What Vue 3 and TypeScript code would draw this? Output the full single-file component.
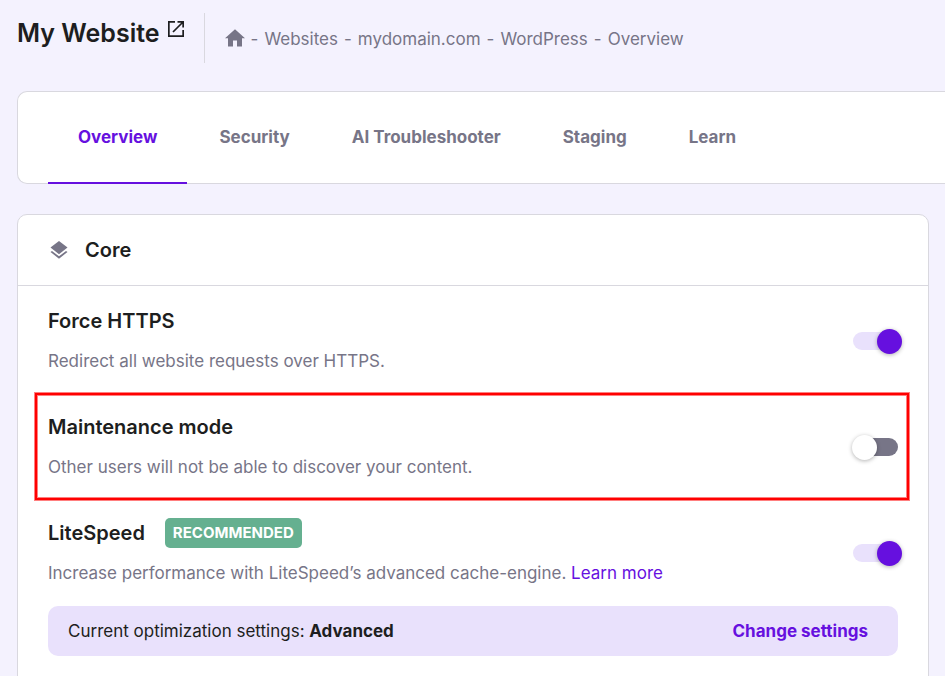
<script setup lang="ts">
import { reactive, ref } from 'vue'

interface Setting {
  id: string
  title: string
  description: string
  enabled: boolean
  highlighted?: boolean
  badge?: string
  link?: string
}

const crumbs: string[] = ['Websites', 'mydomain.com', 'WordPress', 'Overview']
const tabs: string[] = ['Overview', 'Security', 'AI Troubleshooter', 'Staging', 'Learn']
const activeTab = ref<string>('Overview')

const settings = reactive<Setting[]>([
  {
    id: 'force-https',
    title: 'Force HTTPS',
    description: 'Redirect all website requests over HTTPS.',
    enabled: true,
  },
  {
    id: 'maintenance-mode',
    title: 'Maintenance mode',
    description: 'Other users will not be able to discover your content.',
    enabled: false,
    highlighted: true,
  },
  {
    id: 'litespeed',
    title: 'LiteSpeed',
    description: 'Increase performance with LiteSpeed’s advanced cache-engine.',
    enabled: true,
    badge: 'RECOMMENDED',
    link: 'Learn more',
  },
])
</script>

<template>
  <div class="page">
    <header class="header">
      <div class="site">
        <h1 class="site-title">My Website</h1>
        <a href="#" class="site-link" aria-label="Open website">
          <svg viewBox="0 0 18 18" width="18" height="18" fill="none" stroke="currentColor" stroke-width="1.700">
            <path d="M8 1.850H1.850V16.150H16.150V10" />
            <path d="M10.500 1.850H16.150V7.500M16 2L6 12" />
          </svg>
        </a>
      </div>
      <nav class="crumbs" aria-label="Breadcrumb">
        <a href="#" class="home" aria-label="Home">
          <svg viewBox="0 0 20 18" width="20" height="18" fill="currentColor">
            <path d="M8 17.500V11.500H12V17.500H17V9.300H20L10 0.300L0 9.300H3V17.500Z" />
          </svg>
        </a>
        <template v-for="crumb in crumbs" :key="crumb">
          <span class="dash">-</span>
          <a href="#" class="crumb">{{ crumb }}</a>
        </template>
      </nav>
    </header>

    <nav class="tabs" aria-label="Sections">
      <button
        v-for="tab in tabs"
        :key="tab"
        type="button"
        class="tab"
        :class="{ active: tab === activeTab }"
        @click="activeTab = tab"
      >
        {{ tab }}
      </button>
    </nav>

    <section class="card">
      <div class="card-head">
        <svg class="layers" viewBox="0 0 18 18" width="18" height="18" fill="currentColor">
          <path d="M9 0L17.500 6.600L9 13.200L0.500 6.600Z" />
          <path d="M9 15.300L16 9.900L17.500 11L9 17.700L0.500 11L2 9.900Z" />
        </svg>
        <h2 class="heading">Core</h2>
      </div>

      <div class="card-body">
        <div
          v-for="item in settings"
          :key="item.id"
          class="setting"
          :class="{ highlighted: item.highlighted }"
        >
          <div class="info">
            <div class="title-line">
              <label class="heading" :for="item.id">{{ item.title }}</label>
              <span v-if="item.badge" class="badge">{{ item.badge }}</span>
            </div>
            <p class="description">
              {{ item.description }}
              <a v-if="item.link" href="#" class="more">{{ item.link }}</a>
            </p>
          </div>
          <input :id="item.id" v-model="item.enabled" type="checkbox" role="switch" class="switch" />
        </div>

        <div class="banner">
          <p class="banner-text">Current optimization settings: <strong>Advanced</strong></p>
          <button type="button" class="banner-button">Change settings</button>
        </div>
      </div>
    </section>
  </div>
</template>

<style>
body {
  background: #f4f2fe;
}
</style>

<style scoped>
.page {
  --primary: #6610df;
  --light: #e9e1fc;
  --ink: #1d1e20;
  --muted: #777587;
  --line: #d9d8df;
  box-sizing: border-box;
  max-height: 100vh;
  overflow: hidden;
  padding: 13px 16px 0 17px;
  font-family: Inter, "Liberation Sans", sans-serif;
  font-size: 17px;
  line-height: 30px;
  color: var(--ink);
}

h1,
h2,
p {
  margin: 0;
}

a {
  color: inherit;
  text-decoration: none;
}

button {
  border: 0;
  background: none;
  font: inherit;
  font-weight: 700;
  cursor: pointer;
}

strong {
  font-weight: 700;
}

svg {
  display: block;
}

.header {
  display: flex;
  height: 50px;
}

.site {
  display: flex;
  align-items: flex-start;
  gap: 7px;
  padding-right: 19px;
  border-right: 1px solid var(--line);
}

.site-title {
  font-size: 25px;
  line-height: 40px;
  font-weight: 600;
}

.site-link {
  padding-top: 7px;
}

.crumbs {
  display: flex;
  align-items: center;
  gap: 6px;
  padding: 2px 0 0 20px;
  color: var(--muted);
}

.home {
  padding-bottom: 3px;
}

.tabs {
  display: flex;
  gap: 2px;
  margin: 28px -16px 30px 0;
  padding-left: 30px;
  background: #fff;
  border: 1px solid var(--line);
  border-right: 0;
  border-radius: 10px 0 0 10px;
}

.tab {
  margin-bottom: -1px;
  padding: 30px;
  border-bottom: 2px solid transparent;
  color: var(--muted);
}

.tab.active {
  color: var(--primary);
  border-color: var(--primary);
}

.card {
  background: #fff;
  border: 1px solid var(--line);
  border-radius: 10px;
}

.card-head {
  display: flex;
  align-items: center;
  gap: 17px;
  padding: 20px 32px;
  border-bottom: 1px solid var(--line);
}

.layers {
  color: var(--muted);
}

.heading {
  font-size: 20px;
  font-weight: 600;
}

.card-body {
  padding: 0 30px 30px;
}

.setting {
  position: relative;
  display: flex;
  align-items: center;
  justify-content: space-between;
  padding: 20px 0 16px;
}

.setting.highlighted::after {
  content: "";
  position: absolute;
  inset: 1px -11px -2px -13px;
  border: 2px solid #f00;
  box-shadow: 0 0 0 1px #ff000080, inset 0 0 0 1px #ff000080;
  pointer-events: none;
}

.title-line {
  display: flex;
  gap: 20px;
  margin-bottom: 10px;
}

.badge {
  padding: 0 8px;
  border-radius: 5px;
  background: #65b090;
  color: #fff;
  font-size: 15px;
  font-weight: 700;
}

.description {
  color: var(--muted);
}

.more {
  color: var(--primary);
}

.switch {
  appearance: none;
  flex: none;
  display: flex;
  align-items: center;
  width: 45px;
  height: 18px;
  margin: 0;
  border-radius: 9px;
  background: var(--muted);
  cursor: pointer;
}

.switch::before {
  content: "";
  flex: none;
  width: 25px;
  height: 25px;
  margin-left: -1px;
  border-radius: 50%;
  background: #fff;
  box-shadow: 0 1px 4px #0000004d;
}

.switch:checked {
  background: var(--light);
}

.switch:checked::before {
  margin-left: 24px;
  background: var(--primary);
}

.banner {
  display: flex;
  align-items: center;
  justify-content: space-between;
  margin-top: 2px;
  padding: 10px 30px 10px 20px;
  border-radius: 10px;
  background: var(--light);
}

.banner-button {
  padding: 0;
  color: var(--primary);
}
</style>
